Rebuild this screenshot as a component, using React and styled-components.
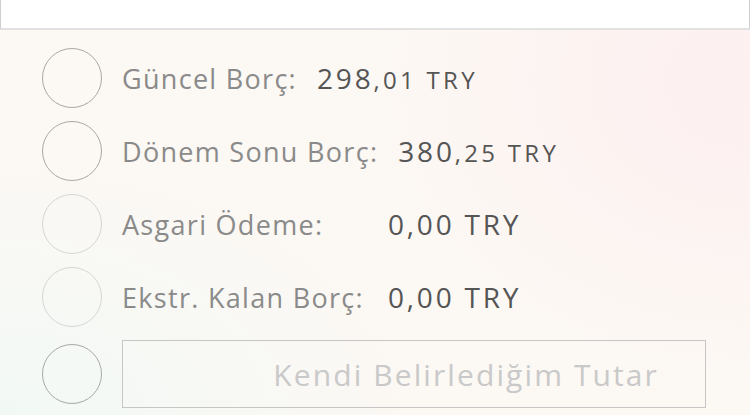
import styled, { createGlobalStyle } from 'styled-components'

const GlobalStyle = createGlobalStyle`
html, body {
  margin: 0;
  padding: 0;
}
body {
  width: 750px;
  height: 415px;
  overflow: hidden;
  font-family: "Open Sans", "Liberation Sans", sans-serif;
  background:
    radial-gradient(ellipse 420px 260px at 0% 100%, #f2f9f5 0%, rgba(242,249,245,0) 100%),
    radial-gradient(ellipse 380px 300px at 100% 20%, #fdf0f0 0%, rgba(253,240,240,0) 100%),
    #fcf8f4;
}
`

const rows = [
  { label: 'Güncel Borç:', big: '298', small: ',01 TRY', tone: 'dark' },
  { label: 'Dönem Sonu Borç:', big: '380', small: ',25 TRY', tone: 'dark' },
  { label: 'Asgari Ödeme:', whole: '0,00 TRY', tone: 'light', wide: true },
  { label: 'Ekstr. Kalan Borç:', whole: '0,00 TRY', tone: 'light', wide: true },
]

function App() {
  return (
    <>
      <GlobalStyle />
      <Page>
        <TopField />
        <List>
          {rows.map((r) => (
            <Row key={r.label}>
              <Radio $tone={r.tone} />
              <Label $wide={r.wide}>{r.label}</Label>
              {r.whole ? (
                <Big>{r.whole}</Big>
              ) : (
                <Amount>
                  <Big>{r.big}</Big>
                  {r.small}
                </Amount>
              )}
            </Row>
          ))}
          <Row>
            <Radio $tone="dark" />
            <AmountInput placeholder="Kendi Belirlediğim Tutar" />
          </Row>
        </List>
      </Page>
    </>
  )
}

const Page = styled.div`
display: flex;
flex-direction: column;
height: 415px;
`

const TopField = styled.div`
height: 28px;
background: #fff;
border-left: 1px solid #cfcfcf;
border-right: 1px solid #cfcfcf;
border-bottom: 2px solid #e2e2e2;
`

const List = styled.div`
display: flex;
flex-direction: column;
gap: 13px;
padding: 18px 0 0 42px;
`

const Row = styled.div`
display: flex;
align-items: center;
min-height: 60px;
`

const Radio = styled.div`
flex: none;
width: 58px;
height: 58px;
border-radius: 50%;
border: 1.5px solid ${p => (p.$tone === 'light' ? '#d6d6d6' : '#a8a8a8')};
margin-right: 20px;
`

const Label = styled.span`
font-size: 27px;
letter-spacing: 1.3px;
color: #8a8a8a;
min-width: ${p => (p.$wide ? '246px' : '0')};
margin-right: 20px;
white-space: nowrap;
`

const Amount = styled.span`
font-size: 24px;
letter-spacing: 3.3px;
color: #555;
white-space: nowrap;
`

const Big = styled.span`
font-size: 28px;
letter-spacing: 2.8px;
color: #555;
white-space: nowrap;
`

const AmountInput = styled.input`
width: 584px;
height: 68px;
box-sizing: border-box;
border: 1px solid #c6c6c6;
background: transparent;
padding: 0 46px 0 0;
text-align: right;
font-family: "Open Sans", "Liberation Sans", sans-serif;
font-size: 30px;
letter-spacing: 2.1px;
outline: none;
&::placeholder {
  color: #c9c9c9;
}
`

export default App
